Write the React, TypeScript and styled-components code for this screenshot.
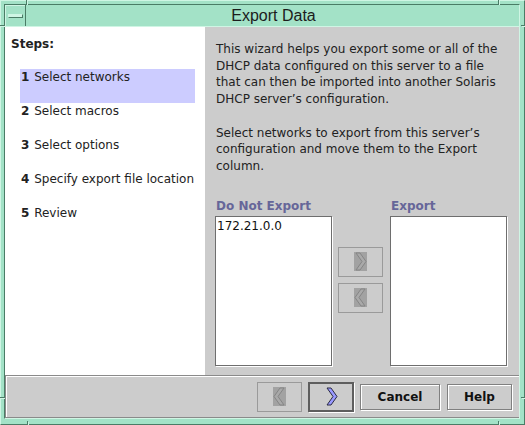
import React from "react";
import styled, { createGlobalStyle } from "styled-components";

const Global = createGlobalStyle`
  html, body { margin: 0; padding: 0; background: #a3e2c7; overflow: hidden; }
  #root { width: 525px; height: 425px; }
`;

const GREEN = "#a3e2c7";
const GREEN_LIGHT = "#cff5e4";
const GREEN_DARK = "#4a7c66";

const Window = styled.div`
  position: relative;
  box-sizing: border-box;
  width: 525px;
  height: 425px;
  background: ${GREEN};
  border: 1px solid;
  border-color: ${GREEN_LIGHT} ${GREEN_DARK} ${GREEN_DARK} ${GREEN_LIGHT};
  padding: 3px 4px 5px 3px;
  display: flex;
`;

const Frame = styled.div`
  flex: 1;
  display: flex;
  flex-direction: column;
  border: 1px solid;
  border-color: ${GREEN_DARK} ${GREEN_LIGHT} ${GREEN_LIGHT} ${GREEN_DARK};
  min-width: 0;
`;

const Notch = styled.span<{ $vertical?: boolean }>`
  position: absolute;
  background: ${GREEN_DARK};
  box-shadow: 1px 1px 0 ${GREEN_LIGHT};
  width: ${(p) => (p.$vertical ? "1px" : "4px")};
  height: ${(p) => (p.$vertical ? "4px" : "1px")};
`;

const TitleBar = styled.div`
  height: 22px;
  display: flex;
  background: ${GREEN};
  border-bottom: 1px solid ${GREEN_LIGHT};
  box-sizing: border-box;
`;

const MenuButton = styled.div`
  width: 21px;
  box-sizing: border-box;
  border-right: 1px solid ${GREEN_DARK};
  display: flex;
  align-items: center;
  justify-content: center;
  box-shadow: inset 1px 1px 0 ${GREEN_LIGHT};
`;

const MenuBar = styled.span`
  display: block;
  width: 13px;
  height: 2px;
  background: ${GREEN_LIGHT};
  border: 1px solid ${GREEN_DARK};
  border-color: ${GREEN_LIGHT} ${GREEN_DARK} ${GREEN_DARK} ${GREEN_LIGHT};
  margin-top: 1px;
`;

const Title = styled.div`
  flex: 1;
  text-align: center;
  font-family: "Liberation Sans", Arial, sans-serif;
  font-size: 16px;
  line-height: 21px;
  color: #1c1c1c;
  padding-left: 2px;
`;

const Body = styled.div`
  height: 348px;
  display: grid;
  grid-template-columns: 200px 1fr;
  font-family: "DejaVu Sans", sans-serif;
  font-size: 12px;
  color: #222;
`;

const StepsPanel = styled.div`
  background: #fff;
  padding: 10px 0 0 6px;
`;

const StepsHeading = styled.div`
  font-weight: bold;
  line-height: 14px;
  margin-bottom: 18px;
`;

const StepList = styled.div`
  display: flex;
  flex-direction: column;
  margin-left: 9px;
  width: 175px;
`;

const Step = styled.div<{ $active?: boolean }>`
  height: 34px;
  box-sizing: border-box;
  padding: 1px 0 0 1px;
  line-height: 14px;
  background: ${(p) => (p.$active ? "#ccccff" : "transparent")};
  white-space: nowrap;
  b { margin-right: 1px; }
`;

const InfoPanel = styled.div`
  background: #cccccc;
  padding: 14px 10px 0 10px;
`;

const Paragraph = styled.p`
  margin: 0 0 16.7px 1px;
  line-height: 16.7px;
  &:last-of-type { margin-bottom: 24px; }
`;

const Transfer = styled.div`
  display: grid;
  grid-template-columns: 117px 46px 117px;
  grid-template-rows: 17px 150px;
  column-gap: 6px;
`;

const ListLabel = styled.div`
  font-weight: bold;
  color: #666699;
  line-height: 14px;
  padding-left: 1px;
`;

const ListBox = styled.div`
  background: #fff;
  border: 1px solid #6e6e6e;
  box-shadow: 1px 1px 0 #fff;
  box-sizing: border-box;
  padding: 2px 1px;
  line-height: 14px;
  color: #111;
`;

const MoveColumn = styled.div`
  display: flex;
  flex-direction: column;
  gap: 6px;
  padding-top: 31px;
`;

const IconButton = styled.div<{ $enabled?: boolean }>`
  box-sizing: border-box;
  height: 30px;
  width: ${(p) => (p.$enabled ? "46px" : "45px")};
  display: flex;
  align-items: center;
  justify-content: center;
  background: #cccccc;
  border: ${(p) => (p.$enabled ? "2px solid #5e5e5e" : "1px solid #9a9a9a")};
  box-shadow: ${(p) => (p.$enabled ? "1px 1px 0 #fff" : "none")};
`;

const ButtonBar = styled.div`
  height: 43px;
  box-sizing: border-box;
  background: #cccccc;
  border-top: 1px solid #8a8a8a;
  border-left: 1px solid #8a8a8a;
  border-bottom: 1px solid #8a8a8a;
  box-shadow: inset 1px 1px 0 #fff;
  display: flex;
  align-items: center;
  justify-content: flex-end;
  padding: 0 7px 0 0;
  gap: 6px;
`;

const TextButton = styled.div<{ $w: number }>`
  box-sizing: border-box;
  width: ${(p) => p.$w}px;
  height: 26px;
  border: 1px solid #808080;
  box-shadow: inset 1px 1px 0 #fff, 1px 1px 0 #fff;
  background: #cccccc;
  display: flex;
  align-items: center;
  justify-content: center;
  font-family: "DejaVu Sans", sans-serif;
  font-weight: bold;
  font-size: 12px;
  color: #111;
`;

const Chevron: React.FC<{ dir: "left" | "right"; enabled?: boolean }> = ({ dir, enabled }) => {
  const pts =
    dir === "right"
      ? "2,1 6,1 12,9.5 6,18 2,18 8,9.5"
      : "11,1 7,1 1,9.5 7,18 11,18 5,9.5";
  return (
    <svg width="13" height="19" viewBox="0 0 13 19">
      {!enabled && <rect x="0" y="0" width="13" height="19" fill="#a2a2a2" />}
      <polygon
        points={pts}
        fill={enabled ? "#9a9aff" : "#a9a9a9"}
        stroke={enabled ? "#2a2a44" : "#858585"}
        strokeWidth="1"
        strokeLinejoin="miter"
      />
    </svg>
  );
};

export default function App() {
  return (
    <>
      <Global />
      <Window>
        <Notch $vertical style={{ left: 25, top: -1 }} />
        <Notch $vertical style={{ left: 497, top: -1 }} />
        <Notch $vertical style={{ left: 26, bottom: -1 }} />
        <Notch $vertical style={{ left: 497, bottom: -1 }} />
        <Notch style={{ left: -1, top: 24 }} />
        <Notch style={{ left: -1, top: 396 }} />
        <Notch style={{ right: -1, top: 24 }} />
        <Notch style={{ right: -1, top: 396 }} />
        <Frame>
          <TitleBar>
            <MenuButton>
              <MenuBar />
            </MenuButton>
            <Title>Export Data</Title>
          </TitleBar>
          <Body>
            <StepsPanel>
              <StepsHeading>Steps:</StepsHeading>
              <StepList>
                <Step $active>
                  <b>1</b> Select networks
                </Step>
                <Step>
                  <b>2</b> Select macros
                </Step>
                <Step>
                  <b>3</b> Select options
                </Step>
                <Step>
                  <b>4</b> Specify export file location
                </Step>
                <Step>
                  <b>5</b> Review
                </Step>
              </StepList>
            </StepsPanel>
            <InfoPanel>
              <Paragraph>
                This wizard helps you export some or all of the
                <br />
                DHCP data configured on this server to a file
                <br />
                that can then be imported into another Solaris
                <br />
                DHCP server’s configuration.
              </Paragraph>
              <Paragraph>
                Select networks to export from this server’s
                <br />
                configuration and move them to the Export
                <br />
                column.
              </Paragraph>
              <Transfer>
                <ListLabel>Do Not Export</ListLabel>
                <div />
                <ListLabel>Export</ListLabel>
                <ListBox>172.21.0.0</ListBox>
                <MoveColumn>
                  <IconButton>
                    <Chevron dir="right" />
                  </IconButton>
                  <IconButton>
                    <Chevron dir="left" />
                  </IconButton>
                </MoveColumn>
                <ListBox />
              </Transfer>
            </InfoPanel>
          </Body>
          <ButtonBar>
            <IconButton>
              <Chevron dir="left" />
            </IconButton>
            <IconButton $enabled>
              <Chevron dir="right" enabled />
            </IconButton>
            <TextButton $w={80}>Cancel</TextButton>
            <TextButton $w={65} style={{ marginLeft: 1 }}>
              Help
            </TextButton>
          </ButtonBar>
        </Frame>
      </Window>
    </>
  );
}
